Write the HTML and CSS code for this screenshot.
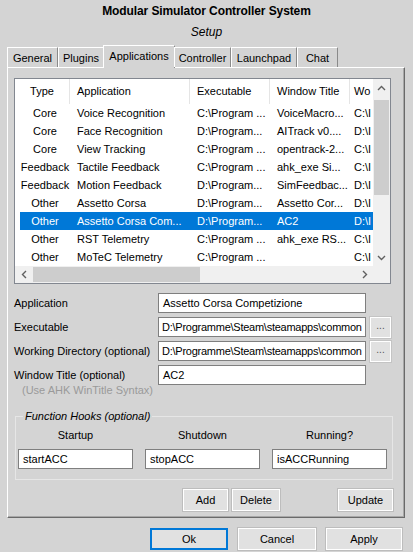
FILE: index.html
```html
<!DOCTYPE html>
<html>
<head>
<meta charset="utf-8">
<link rel="stylesheet" href="styles.css">
</head>
<body>
<div class="window">
  <div class="title">Modular Simulator Controller System</div>
  <div class="subtitle">Setup</div>
  <div class="tabs">
    <div class="tab t-general">General</div>
    <div class="tab t-plugins">Plugins</div>
    <div class="tab active t-apps">Applications</div>
    <div class="tab t-controller">Controller</div>
    <div class="tab t-launchpad">Launchpad</div>
    <div class="tab t-chat">Chat</div>
  </div>
  <div class="panel">
    <div class="list">
      <div class="list-main">
        <div class="list-content">
          <div class="lhead">
            <div class="c c1 center">Type</div>
            <div class="c c2">Application</div>
            <div class="c c3">Executable</div>
            <div class="c c4">Window Title</div>
            <div class="c c5">Wo</div>
          </div>
          <div class="lrow"><div class="c c1 center">Core</div><div class="c c2">Voice Recognition</div><div class="c c3">C:\Program ...</div><div class="c c4">VoiceMacro...</div><div class="c c5">C:\I</div></div>
          <div class="lrow"><div class="c c1 center">Core</div><div class="c c2">Face Recognition</div><div class="c c3">D:\Program...</div><div class="c c4">AITrack v0....</div><div class="c c5">D:\I</div></div>
          <div class="lrow"><div class="c c1 center">Core</div><div class="c c2">View Tracking</div><div class="c c3">C:\Program ...</div><div class="c c4">opentrack-2...</div><div class="c c5">C:\I</div></div>
          <div class="lrow"><div class="c c1 center">Feedback</div><div class="c c2">Tactile Feedback</div><div class="c c3">C:\Program ...</div><div class="c c4">ahk_exe Si...</div><div class="c c5">C:\I</div></div>
          <div class="lrow"><div class="c c1 center">Feedback</div><div class="c c2">Motion Feedback</div><div class="c c3">D:\Program...</div><div class="c c4">SimFeedbac...</div><div class="c c5">D:\I</div></div>
          <div class="lrow"><div class="c c1 center">Other</div><div class="c c2">Assetto Corsa</div><div class="c c3">D:\Program...</div><div class="c c4">Assetto Cor...</div><div class="c c5">D:\I</div></div>
          <div class="lrow selected"><div class="c c1 center">Other</div><div class="c c2">Assetto Corsa Com...</div><div class="c c3">D:\Program...</div><div class="c c4">AC2</div><div class="c c5">D:\I</div></div>
          <div class="lrow"><div class="c c1 center">Other</div><div class="c c2">RST Telemetry</div><div class="c c3">C:\Program ...</div><div class="c c4">ahk_exe RS...</div><div class="c c5">C:\I</div></div>
          <div class="lrow"><div class="c c1 center">Other</div><div class="c c2">MoTeC Telemetry</div><div class="c c3">C:\Program ...</div><div class="c c4"></div><div class="c c5">C:\I</div></div>
        </div>
        <div class="vscroll">
          <div class="arrow">
            <svg width="9" height="6" viewBox="0 0 9 6"><path d="M1 5 L4.5 1.5 L8 5" fill="none" stroke="#606060" stroke-width="1.4"/></svg>
          </div>
          <div class="vtrack"><div class="vthumb"></div></div>
          <div class="arrow">
            <svg width="9" height="6" viewBox="0 0 9 6"><path d="M1 1 L4.5 4.5 L8 1" fill="none" stroke="#606060" stroke-width="1.4"/></svg>
          </div>
        </div>
      </div>
      <div class="hscroll">
        <div class="harrow">
          <svg width="6" height="9" viewBox="0 0 6 9"><path d="M5 1 L1.5 4.5 L5 8" fill="none" stroke="#606060" stroke-width="1.4"/></svg>
        </div>
        <div class="htrack"><div class="hthumb"></div></div>
        <div class="harrow">
          <svg width="6" height="9" viewBox="0 0 6 9"><path d="M1 1 L4.5 4.5 L1 8" fill="none" stroke="#606060" stroke-width="1.4"/></svg>
        </div>
        <div class="corner"></div>
      </div>
    </div>

    <div class="form">
      <div class="frow">
        <div class="flabel">Application</div>
        <div class="input wide">Assetto Corsa Competizione</div>
      </div>
      <div class="frow">
        <div class="flabel">Executable</div>
        <div class="input wide tight">D:\Programme\Steam\steamapps\common</div>
        <div class="dots">...</div>
      </div>
      <div class="frow">
        <div class="flabel">Working Directory (optional)</div>
        <div class="input wide tight">D:\Programme\Steam\steamapps\common</div>
        <div class="dots">...</div>
      </div>
      <div class="frow top">
        <div class="flabel two">Window Title (optional)<div class="hint">(Use AHK WinTitle Syntax)</div></div>
        <div class="input wide">AC2</div>
      </div>
    </div>

    <fieldset class="hooks">
      <legend>Function Hooks (optional)</legend>
      <div class="hgrid">
        <div class="hlabel">Startup</div>
        <div class="hlabel">Shutdown</div>
        <div class="hlabel">Running?</div>
        <div class="input">startACC</div>
        <div class="input">stopACC</div>
        <div class="input">isACCRunning</div>
      </div>
    </fieldset>

    <div class="actions">
      <div class="btn b-add">Add</div>
      <div class="btn b-delete">Delete</div>
      <div class="btn b-update">Update</div>
    </div>
  </div>
  <div class="footer">
    <div class="btn b-ok">Ok</div>
    <div class="btn b-cancel">Cancel</div>
    <div class="btn b-apply">Apply</div>
  </div>
</div>
</body>
</html>
```
FILE: styles.css
```css
* { box-sizing: border-box; }
html, body { margin: 0; padding: 0; }
body {
  background: #d4d4d4;
  font-family: "Liberation Sans", Arial, sans-serif;
  font-size: 11px;
  color: #000;
  width: 413px;
  height: 552px;
  overflow: hidden;
}
.window { width: 413px; }
.title {
  margin-top: 3px;
  height: 16px;
  line-height: 16px;
  text-align: center;
  font-weight: bold;
  font-size: 12px;
  letter-spacing: -0.1px;
}
.subtitle {
  margin-top: 5px;
  height: 16px;
  line-height: 16px;
  text-align: center;
  font-style: italic;
  font-size: 12px;
}
.tabs {
  display: flex;
  margin-top: 5px;
  margin-left: 7px;
  height: 22px;
  align-items: flex-end;
  position: relative;
  z-index: 2;
}
.tab {
  height: 20px;
  line-height: 20px;
  text-align: center;
  border-top: 1px solid #fff;
  border-left: 1px solid #fff;
  border-right: 1px solid #8a8a8a;
  background: #d4d4d4;
}
.t-general { width: 51px; }
.t-plugins { width: 46px; }
.t-apps { width: 72px; }
.t-controller { width: 57px; }
.t-launchpad { width: 66px; }
.t-chat { width: 41px; }
.tab.active {
  height: 23px;
  line-height: 21px;
  margin-bottom: -1px;
  margin-left: -1px;
  margin-right: -1px;
  border-bottom: 0;
}
.panel {
  width: 398px;
  height: 451px;
  margin-left: 7px;
  border-top: 1px solid #fff;
  border-left: 1px solid #fff;
  border-right: 1px solid #6a6a6a;
  border-bottom: 1px solid #6a6a6a;
  box-shadow: inset -1px -1px 0 #a8a8a8;
  padding: 10px 0 0 6px;
}
.list {
  width: 377px;
  height: 206px;
  border: 1px solid #828790;
  background: #fff;
  display: flex;
  flex-direction: column;
}
.list-main { display: flex; height: 187px; }
.list-content { width: 358px; overflow: hidden; }
.lhead {
  display: flex;
  height: 25px;
  align-items: center;
}
.lhead .c { height: 25px; line-height: 25px; border-right: 1px solid #e5e5e5; }
.lhead .c1 { width: 55px; }
.lhead .c5 { border-right: 0; }
.lrow {
  display: flex;
  height: 18px;
  line-height: 18px;
  margin-left: 5px;
}
.lrow .c1 { width: 50px; }
.c { white-space: nowrap; overflow: hidden; padding-left: 7px; }
.c.center { text-align: center; padding-left: 0; }
.c2 { width: 120px; }
.c3 { width: 80px; }
.c4 { width: 80px; }
.c5 { width: 22px; padding-left: 4px; }
.lrow.selected { background: #0078d7; color: #fff; }
.vscroll {
  width: 17px;
  background: #f0f0f0;
  display: flex;
  flex-direction: column;
}
.arrow {
  height: 17px;
  display: flex;
  align-items: center;
  justify-content: center;
}
.vtrack { flex: 1; padding: 4px 1px 0 1px; }
.vthumb { height: 95px; background: #cdcdcd; }
.hscroll {
  display: flex;
  height: 17px;
  background: #f0f0f0;
}
.harrow {
  width: 17px;
  display: flex;
  align-items: center;
  justify-content: center;
}
.htrack { width: 324px; padding: 1px 0 1px 1px; }
.hthumb { width: 167px; height: 15px; background: #cdcdcd; }
.corner { width: 17px; background: #f0f0f0; }

.form { margin-top: 9px; display: flex; flex-direction: column; gap: 4px; }
.frow { display: flex; align-items: center; height: 20px; }
.frow.top { align-items: flex-start; height: auto; }
.flabel { width: 144px; white-space: nowrap; }
.flabel.two { padding-top: 3px; line-height: 15px; }
.hint { color: #9a9a9a; padding-left: 8px; }
.input {
  height: 20px;
  line-height: 18px;
  background: #fff;
  border: 1px solid #7f7f7f;
  padding-left: 4px;
  white-space: nowrap;
  overflow: hidden;
}
.input.wide { width: 208px; }
.input.tight { padding-left: 3px; letter-spacing: -0.25px; }
.dots {
  width: 21px;
  height: 21px;
  margin-left: 4px;
  background: #e1e1e1;
  border: 1px solid #fff;
  box-shadow: 0 0 0 1px #c4c4c4;
  text-align: center;
  line-height: 16px;
  color: #555;
  font-size: 10px;
}

.hooks {
  margin: 11px 0 0 1px;
  width: 378px;
  padding: 0 0 10px 2px;
  border: 1px solid #e6e6e6;
  min-width: 0;
}
.hooks legend {
  font-style: italic;
  margin-left: 5px;
  padding: 0 2px;
  line-height: 15px;
}
.hgrid {
  display: grid;
  grid-template-columns: 115px 115px 115px;
  column-gap: 12px;
  row-gap: 6px;
}
.hlabel { text-align: center; line-height: 15px; margin-top: 4px; }

.actions {
  display: flex;
  margin-top: 9px;
  width: 379px;
}
.btn {
  height: 22px;
  line-height: 20px;
  text-align: center;
  background: #e1e1e1;
  border: 1px solid #fff;
  box-shadow: 0 0 0 1px #bdbdbd;
}
.b-add { width: 45px; margin-left: 169px; }
.b-delete { width: 48px; margin-left: 4px; }
.b-update { width: 55px; margin-left: auto; }

.footer {
  display: flex;
  justify-content: flex-end;
  gap: 10px;
  margin-top: 10px;
  padding-right: 11px;
}
.b-ok { width: 78px; border: 2px solid #0078d7; box-shadow: none; line-height: 18px; }
.b-cancel { width: 78px; }
.b-apply { width: 76px; }
```
